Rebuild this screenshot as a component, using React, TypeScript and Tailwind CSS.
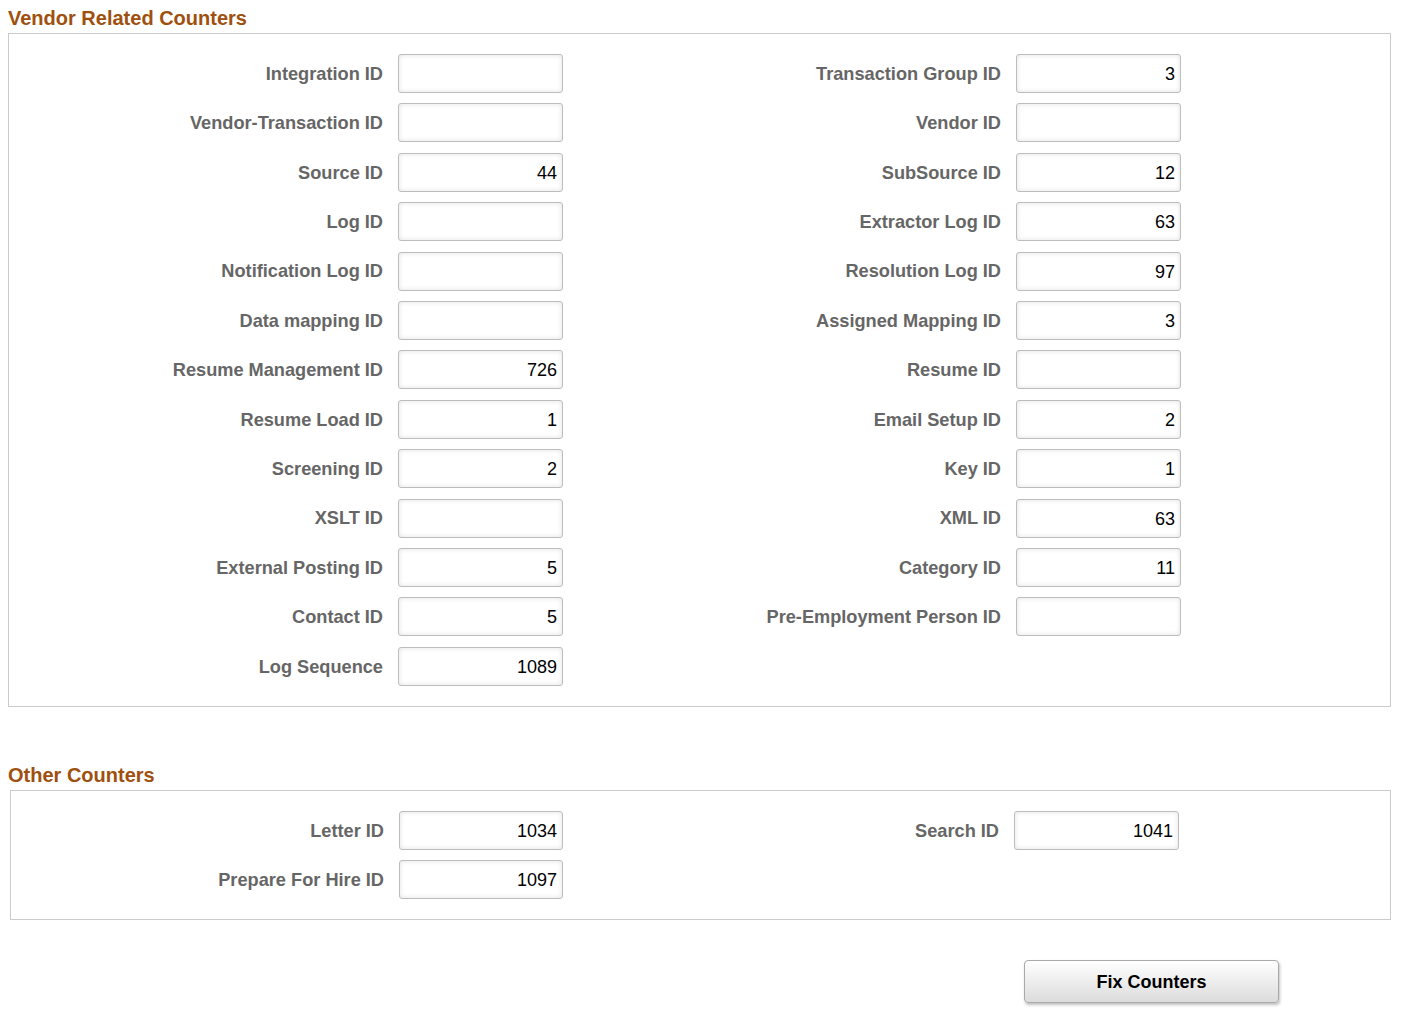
const vendorLeft: [string, string][] = [
  ['Integration ID', ''],
  ['Vendor-Transaction ID', ''],
  ['Source ID', '44'],
  ['Log ID', ''],
  ['Notification Log ID', ''],
  ['Data mapping ID', ''],
  ['Resume Management ID', '726'],
  ['Resume Load ID', '1'],
  ['Screening ID', '2'],
  ['XSLT ID', ''],
  ['External Posting ID', '5'],
  ['Contact ID', '5'],
  ['Log Sequence', '1089'],
];

const vendorRight: [string, string][] = [
  ['Transaction Group ID', '3'],
  ['Vendor ID', ''],
  ['SubSource ID', '12'],
  ['Extractor Log ID', '63'],
  ['Resolution Log ID', '97'],
  ['Assigned Mapping ID', '3'],
  ['Resume ID', ''],
  ['Email Setup ID', '2'],
  ['Key ID', '1'],
  ['XML ID', '63'],
  ['Category ID', '11'],
  ['Pre-Employment Person ID', ''],
];

function Label({ text }: { text: string }) {
  return (
    <div className="flex h-[39px] items-center justify-end pt-[2px] text-[18.2px] font-bold text-[#666666] whitespace-nowrap">
      {text}
    </div>
  );
}

function Box({ value, w = 'w-[165px]' }: { value: string; w?: string }) {
  return (
    <div
      className={`flex h-[39px] ${w} items-center justify-end rounded-[3px] border border-[#bdbdbd] bg-white pr-[5px] pt-[2px] text-[18px] text-black shadow-[inset_0_0_5px_rgba(0,0,0,0.12)]`}
    >
      {value}
    </div>
  );
}

export default function App() {
  const rows = vendorLeft.map((l, i) => ({ l, r: vendorRight[i] }));
  return (
    <div className="min-h-[1010px] w-[1403px] bg-white font-['Liberation_Sans',Arial,sans-serif]">
      <h2 className="pl-[8px] pt-[7px] text-[20px] font-bold leading-[23px] text-[#a0500e]">
        Vendor Related Counters
      </h2>

      <div className="ml-[8px] mt-[3px] w-[1383px] border border-[#cbcbcb] pb-[20px] pt-[20px]">
        <div className="grid grid-cols-[374px_165px_423px_165px] gap-x-[15px] gap-y-[10.4px]">
          {rows.map(({ l, r }) => (
            <div key={l[0]} className="contents">
              <Label text={l[0]} />
              <Box value={l[1]} />
              {r ? <Label text={r[0]} /> : <div />}
              {r ? <Box value={r[1]} /> : <div />}
            </div>
          ))}
        </div>
      </div>

      <h2 className="mt-[57px] pl-[8px] text-[20px] font-bold leading-[23px] text-[#a0500e]">
        Other Counters
      </h2>

      <div className="ml-[10px] mt-[3px] w-[1381px] border border-[#cbcbcb] pb-[20px] pt-[20px]">
        <div className="grid grid-cols-[373px_164px_421px_165px] gap-x-[15px] gap-y-[10px]">
          <Label text="Letter ID" />
          <Box value="1034" w="w-[164px]" />
          <Label text="Search ID" />
          <Box value="1041" />
          <Label text="Prepare For Hire ID" />
          <Box value="1097" w="w-[164px]" />
          <div />
          <div />
        </div>
      </div>

      <div className="flex pl-[1024px] pt-[40px]">
        <button className="h-[43px] w-[255px] rounded-[4px] border border-[#a9a9a9] bg-gradient-to-b from-white to-[#dcdcdc] pt-[3px] text-[18px] font-bold text-black shadow-[1px_2px_3px_rgba(0,0,0,0.25)]">
          Fix Counters
        </button>
      </div>
    </div>
  );
}
